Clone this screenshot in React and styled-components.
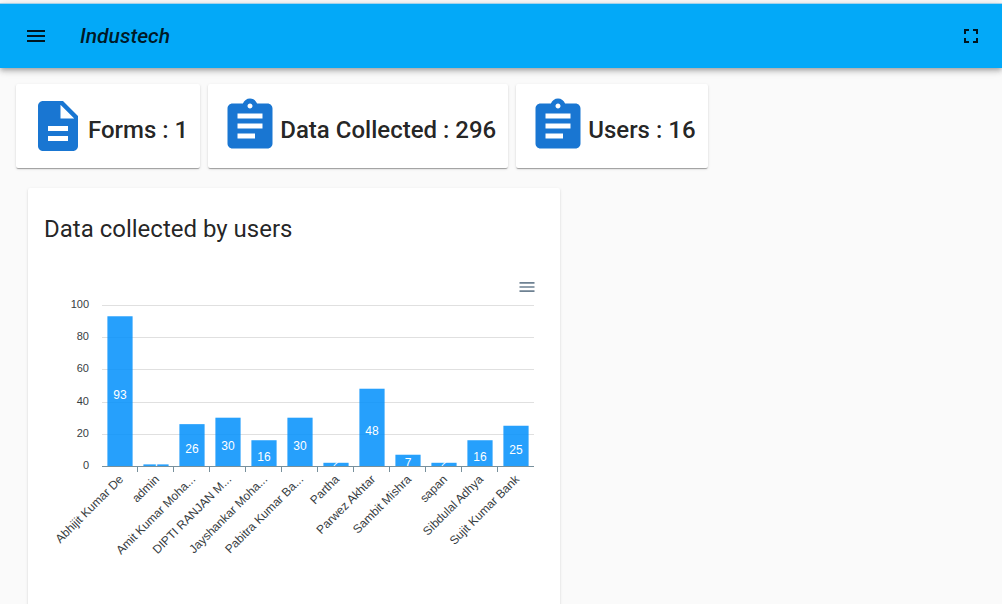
import React from 'react';
import styled, { createGlobalStyle } from 'styled-components';
import { MdMenu, MdFullscreen, MdDescription, MdAssignment } from 'react-icons/md';

const GlobalStyle = createGlobalStyle`
  * {
    box-sizing: border-box;
  }
  body {
    margin: 0;
    background: #fafafa;
    color: rgba(0, 0, 0, 0.87);
    font-family: Roboto, 'Helvetica Neue', sans-serif;
  }
`;

const Page = styled.div`
  height: 100vh;
  padding-top: 3px;
  overflow: hidden;
`;

const Toolbar = styled.header`
  position: relative;
  display: flex;
  align-items: center;
  height: 65px;
  padding: 0 16px;
  border-top: 1px solid #a5d2ea;
  background: #03a9f8;
  box-shadow: 0 2px 4px -1px rgba(0, 0, 0, 0.2), 0 4px 5px 0 rgba(0, 0, 0, 0.14), 0 1px 10px 0 rgba(0, 0, 0, 0.12);
`;

const IconButton = styled.button`
  display: flex;
  align-items: center;
  justify-content: center;
  width: ${(props) => props.$size}px;
  height: ${(props) => props.$size}px;
  padding: 0;
  border: 0;
  background: transparent;
  color: ${(props) => props.$color || 'inherit'};
  cursor: pointer;
`;

const Brand = styled.h1`
  flex: 1;
  margin: 0 0 0 24px;
  font-size: 21px;
  font-style: italic;
  font-weight: 500;
  line-height: 32px;
`;

const Content = styled.main`
  padding: 16px;
`;

const StatRow = styled.section`
  display: flex;
  flex-wrap: wrap;
  gap: 8px;
`;

const Card = styled.div`
  border-radius: 2px;
  background: #fff;
  box-shadow: 0 2px 1px -1px rgba(0, 0, 0, 0.2), 0 1px 1px 0 rgba(0, 0, 0, 0.14), 0 1px 3px 0 rgba(0, 0, 0, 0.12);
`;

const StatCard = styled(Card)`
  display: flex;
  align-items: center;
  padding: 12px;
`;

const StatIcon = styled.span`
  display: flex;
  color: #1976d2;
`;

const StatLabel = styled.h2`
  margin: 8px 0 0;
  font-size: 24px;
  font-weight: 500;
  line-height: 32px;
`;

const ChartCard = styled(Card)`
  max-width: 532px;
  margin: 20px 12px;
  padding: 25px 16px;
`;

const ChartTitle = styled.h2`
  margin: 0;
  font-size: 24px;
  font-weight: 400;
  line-height: 32px;
`;

const ChartTools = styled.div`
  display: flex;
  justify-content: flex-end;
  margin-top: 32px;
  padding-right: 7px;
`;

const Chart = styled.svg`
  display: block;
  width: 100%;
  font-family: 'Liberation Sans', Arial, sans-serif;
`;

const GridLine = styled.line`
  stroke: #e0e0e0;
`;

const AxisLine = styled.line`
  stroke: #78909c;
`;

const Bar = styled.rect`
  fill: #008ffb;
  fill-opacity: 0.85;
`;

const BarValue = styled.text`
  fill: #fff;
  font-size: 12px;
  text-anchor: middle;
`;

const AxisLabel = styled.text`
  fill: #373d3f;
  font-size: ${(props) => props.$size}px;
  text-anchor: end;
`;

const stats = [
  { label: 'Forms', value: 1, icon: MdDescription },
  { label: 'Data Collected', value: 296, icon: MdAssignment },
  { label: 'Users', value: 16, icon: MdAssignment },
];

const users = [
  { name: 'Abhijit Kumar De', count: 93 },
  { name: 'admin', count: 1 },
  { name: 'Amit Kumar Moha...', count: 26 },
  { name: 'DIPTI RANJAN M...', count: 30 },
  { name: 'Jayshankar Moha...', count: 16 },
  { name: 'Pabitra Kumar Ba...', count: 30 },
  { name: 'Partha', count: 2 },
  { name: 'Parwez Akhtar', count: 48 },
  { name: 'Sambit Mishra', count: 7 },
  { name: 'sapan', count: 2 },
  { name: 'Sibdulal Adhya', count: 16 },
  { name: 'Sujit Kumar Bank', count: 25 },
];

const ticks = [0, 20, 40, 60, 80, 100];

// plot area inside the 500x340 chart
const left = 58;
const right = 490;
const top = 8;
const bottom = 169;
const step = (right - left) / users.length;
const barWidth = step * 0.7;

const toY = (value) => bottom - (value / 100) * (bottom - top);

const UserChart = () => (
  <Chart viewBox='0 0 500 340' role='img' aria-label='Data collected by users'>
    {ticks.map((tick) => (
      <g key={tick}>
        <GridLine x1={left} x2={right} y1={Math.round(toY(tick)) + 0.5} y2={Math.round(toY(tick)) + 0.5} />
        <AxisLabel $size={11} x={45} y={Math.round(toY(tick)) + 3}>{tick}</AxisLabel>
      </g>
    ))}
    {users.map((user, i) => {
      const center = left + step * (i + 0.5);
      const y = toY(user.count);
      return (
        <g key={user.name}>
          <Bar x={center - barWidth / 2} y={y} width={barWidth} height={bottom - y} />
          <BarValue x={center} y={Math.min((y + bottom) / 2 + 8, bottom + 1)}>{user.count}</BarValue>
          {i > 0 && <AxisLine x1={left + step * i - 0.5} x2={left + step * i - 0.5} y1={bottom} y2={bottom + 6} />}
          <AxisLabel $size={12} transform={`translate(${center + 4} ${bottom + 14}) rotate(-45)`}>
            {user.name}
          </AxisLabel>
        </g>
      );
    })}
    <AxisLine x1={left} x2={right} y1={bottom + 0.5} y2={bottom + 0.5} />
  </Chart>
);

const App = () => (
  <>
    <GlobalStyle />
    <Page>
      <Toolbar>
        <IconButton $size={40} aria-label='Menu'><MdMenu size={24} /></IconButton>
        <Brand>Industech</Brand>
        <IconButton $size={30} aria-label='Fullscreen'><MdFullscreen size={24} /></IconButton>
      </Toolbar>
      <Content>
        <StatRow>
          {stats.map(({ label, value, icon: Icon }) => (
            <StatCard key={label}>
              <StatIcon><Icon size={60} /></StatIcon>
              <StatLabel>{label} : {value}</StatLabel>
            </StatCard>
          ))}
        </StatRow>
        <ChartCard>
          <ChartTitle>Data collected by users</ChartTitle>
          <ChartTools>
            <IconButton $size={20} $color='#6e8192' aria-label='Chart menu'><MdMenu size={20} /></IconButton>
          </ChartTools>
          <UserChart />
        </ChartCard>
      </Content>
    </Page>
  </>
);

export default App;
